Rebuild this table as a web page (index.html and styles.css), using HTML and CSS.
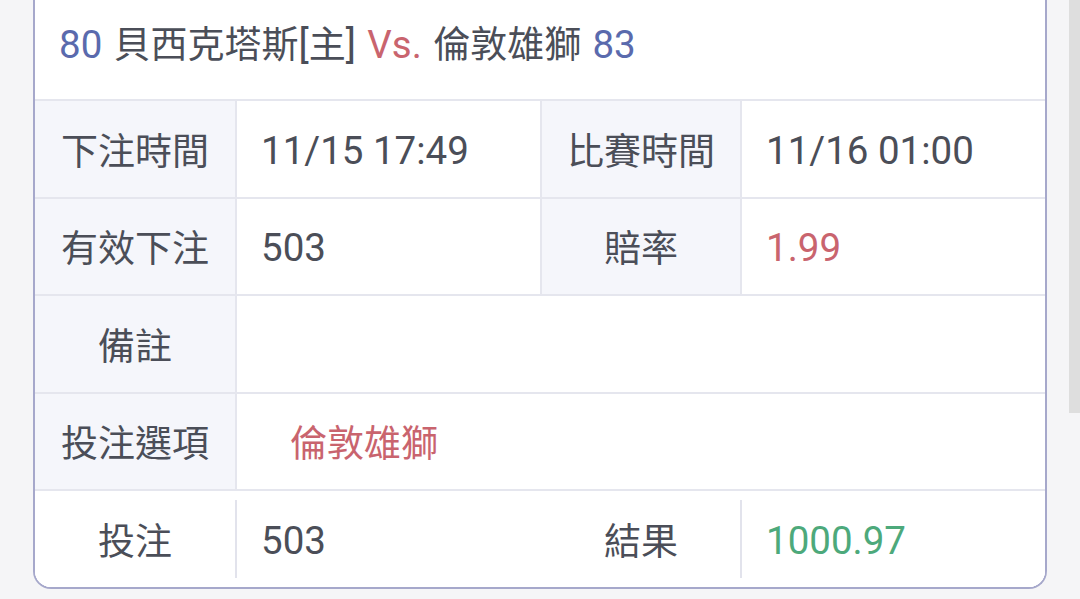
FILE: index.html
```html
<!DOCTYPE html>
<html lang="zh-Hant">
<head>
<meta charset="utf-8">
<link rel="stylesheet" href="styles.css">
</head>
<body>
<div class="card">
  <div class="head"><span class="lat blue">80</span> 貝西克塔斯<span class="lat">[</span>主<span class="lat">]</span> <span class="lat red">Vs.</span> 倫敦雄獅 <span class="lat blue">83</span></div>
  <div class="row">
    <div class="label">下注時間</div>
    <div class="val lat">11/15 17:49</div>
    <div class="label">比賽時間</div>
    <div class="val lat">11/16 01:00</div>
  </div>
  <div class="row">
    <div class="label">有效下注</div>
    <div class="val lat">503</div>
    <div class="label">賠率</div>
    <div class="val lat red">1.99</div>
  </div>
  <div class="row">
    <div class="label">備註</div>
    <div class="val wide"></div>
  </div>
  <div class="row">
    <div class="label">投注選項</div>
    <div class="val wide red indent">倫敦雄獅</div>
  </div>
  <div class="row last">
    <div class="label plain">投注</div>
    <div class="val sep lat">503</div>
    <div class="label plain">結果</div>
    <div class="val sep lat green">1000.97</div>
  </div>
</div>
<div class="scroll-thumb"></div>
</body>
</html>
```
FILE: styles.css
```css
html, body {
  margin: 0;
  padding: 0;
  background: #f5f5f7;
  font-family: "Noto Sans CJK TC", "Noto Sans CJK SC", sans-serif;
  color: #4b4e58;
  font-size: 37px;
}
.lat {
  font-family: Roboto, "Noto Sans CJK TC", sans-serif;
  font-size: 38.5px;
}
.card {
  margin-left: 33px;
  width: 1010px;
  background: #ffffff;
  border: 2px solid #a6a8cb;
  border-top: none;
  border-radius: 0 0 18px 18px;
}
.head {
  height: 99px;
  padding-left: 24px;
  line-height: 85px;
  white-space: nowrap;
  word-spacing: 3px;
}
.blue { color: #5a6aad; }
.red { color: #c9646e; }
.green { color: #4da97b; }
.row {
  display: grid;
  grid-template-columns: 200px 303px 198px 303px;
  column-gap: 2px;
  background: #e5e6ee;
  border-top: 2px solid #e5e6ee;
  height: 95.5px;
}
.row.last {
  height: 96px;
  background: #ffffff;
  border-radius: 0 0 16px 16px;
}
.label {
  background: #f5f6fb;
  display: flex;
  align-items: center;
  justify-content: center;
}
.val {
  background: #ffffff;
  display: flex;
  align-items: center;
  padding-left: 24px;
}
.val.lat {
  padding-top: 3px;
}
.wide {
  grid-column: 2 / 5;
}
.indent {
  padding-left: 53px;
}
.label.plain {
  background: #ffffff;
}
.val.sep {
  position: relative;
}
.val.sep::before {
  content: "";
  position: absolute;
  left: -2px;
  top: 9px;
  bottom: 9px;
  width: 2px;
  background: #e2e3ec;
}
.last .label.plain:first-child {
  border-radius: 0 0 0 16px;
}
.last .val.green {
  border-radius: 0 0 16px 0;
}
.scroll-thumb {
  position: fixed;
  top: 0;
  right: 0;
  width: 11px;
  height: 413px;
  background: #dedede;
}
```
